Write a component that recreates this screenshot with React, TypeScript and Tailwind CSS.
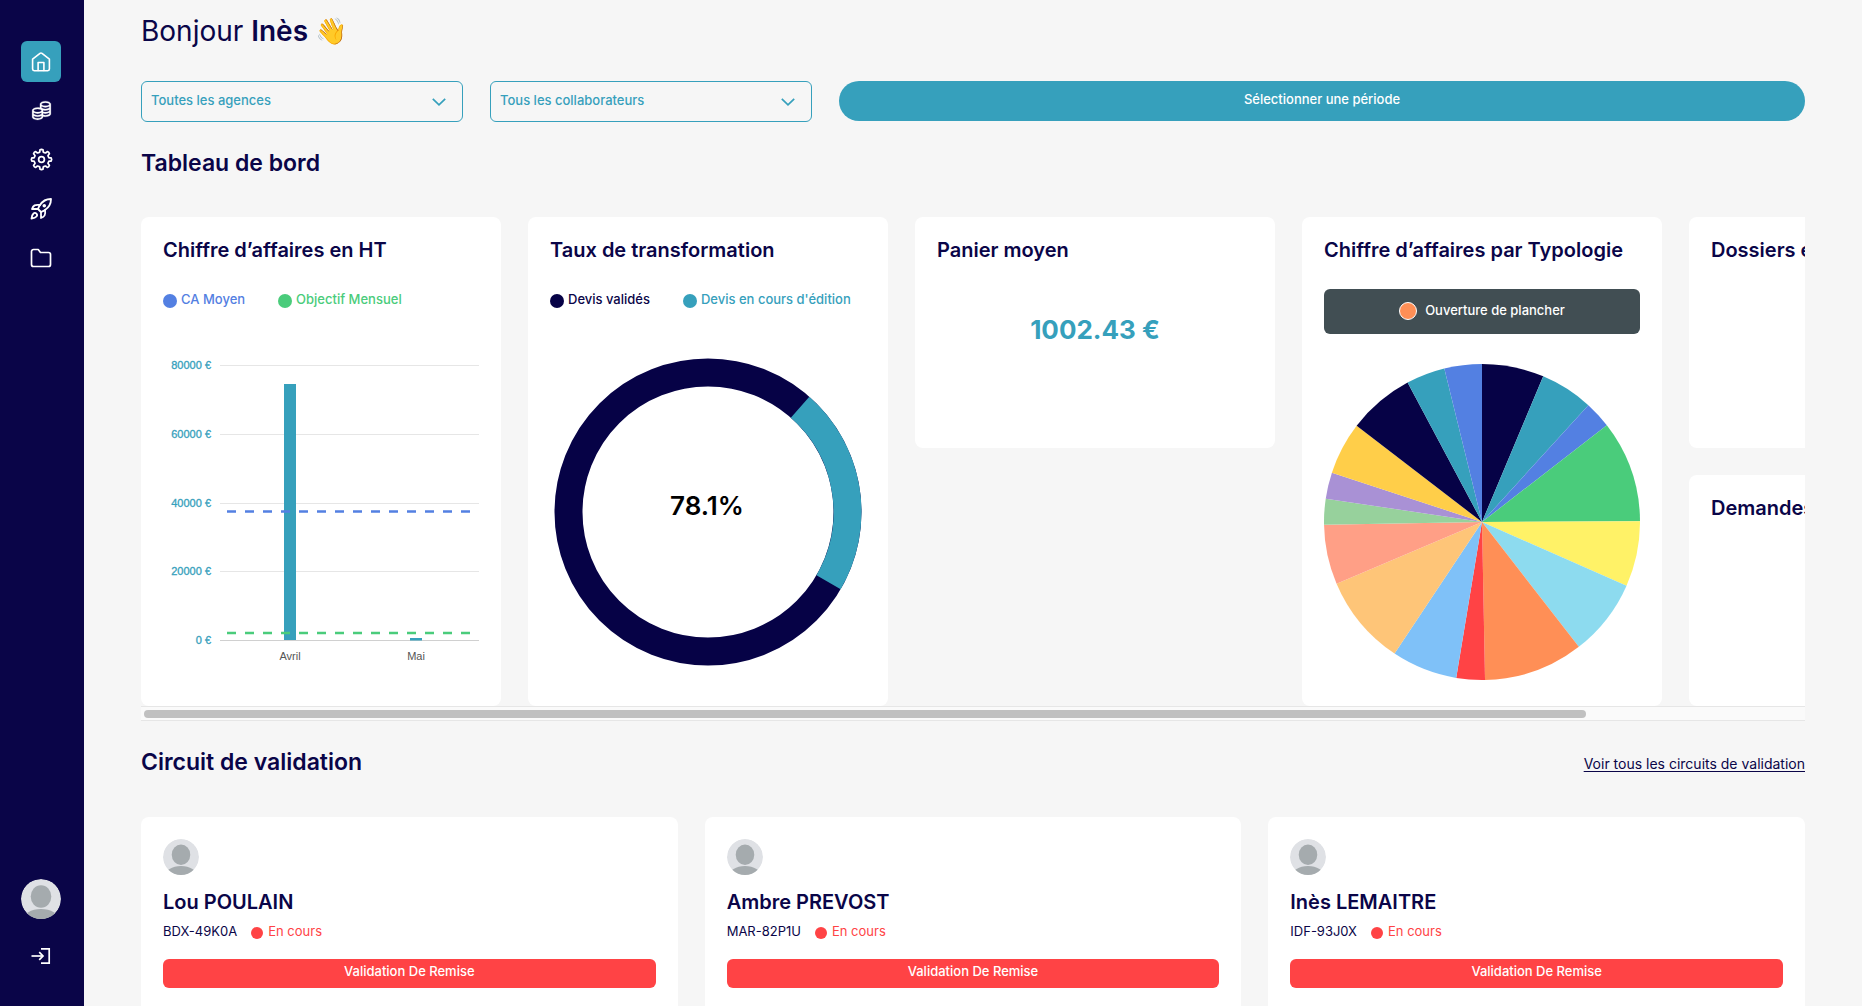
import type { ReactNode } from 'react';
import { LiaCoinsSolid } from 'react-icons/lia';

const NAVY = '#060246';
const TEAL = '#36A0BC';
const BLUE = '#5380E2';
const GREEN = '#4ACC7B';

function polar(cx: number, cy: number, r: number, deg: number) {
  const a = ((deg - 90) * Math.PI) / 180;
  return `${(cx + r * Math.cos(a)).toFixed(2)} ${(cy + r * Math.sin(a)).toFixed(2)}`;
}

/* ---------- Icons ---------- */

function HomeIcon() {
  return (
    <svg viewBox="0 0 20 20" className="size-5" fill="none" stroke="currentColor" strokeWidth="1.6" strokeLinejoin="round" strokeLinecap="round" aria-hidden="true">
      <path d="M1.6 7.2 9 1.4a1.6 1.6 0 0 1 2 0l7.4 5.8v9.9a1.6 1.6 0 0 1-1.6 1.6H3.2a1.6 1.6 0 0 1-1.6-1.6z" />
      <path d="M7.1 18.5v-8h5.8v8" />
    </svg>
  );
}

function GearIcon() {
  let d = '';
  const teeth = 8;
  const pts: [number, number][] = [
    [-22.5, 7.7], [-13, 8], [-9, 10.2], [0, 10.6], [9, 10.2], [13, 8],
  ];
  for (let i = 0; i < teeth; i++) {
    pts.forEach(([off, r]) => {
      d += `${d ? 'L' : 'M'}${polar(12, 12, r, i * 45 + off)}`;
    });
  }
  return (
    <svg viewBox="0 0 24 24" className="size-[23px]" fill="none" stroke="currentColor" strokeWidth="1.8" strokeLinejoin="round" aria-hidden="true">
      <path d={d + 'Z'} />
      <circle cx="12" cy="12" r="3" />
    </svg>
  );
}

function RocketIcon() {
  return (
    <svg viewBox="0 0 24 24" className="size-6" fill="none" stroke="currentColor" strokeWidth="1.8" strokeLinecap="round" strokeLinejoin="round" aria-hidden="true">
      <path d="M4.5 16.5c-1.5 1.26-2 5-2 5s3.74-.5 5-2c.71-.84.7-2.13-.09-2.91a2.18 2.18 0 0 0-2.91-.09z" />
      <path d="m12 15-3-3a22 22 0 0 1 2-3.95A12.88 12.88 0 0 1 22 2c0 2.72-.78 7.5-6 11a22.35 22.35 0 0 1-4 2z" />
      <path d="M9 12H3s.9-2.6 2.6-3.6C7.4 7.4 11 8 11 8M12 15v6s2.6-.9 3.6-2.6C16.6 16.6 16 13 16 13" />
      <circle cx="15.3" cy="8.8" r="1.8" fill="currentColor" stroke="none" />
    </svg>
  );
}

function FolderIcon() {
  return (
    <svg viewBox="0 0 24 24" className="size-6" fill="none" stroke="currentColor" strokeWidth="1.7" strokeLinejoin="round" aria-hidden="true">
      <path d="M21.5 18.5a2 2 0 0 1-2 2h-15a2 2 0 0 1-2-2v-13a2 2 0 0 1 2-2h4.700l2.300 3h8a2 2 0 0 1 2 2z" />
    </svg>
  );
}

function LogoutIcon() {
  return (
    <svg viewBox="0 0 20 18" className="h-[18px] w-5" fill="none" stroke="currentColor" strokeWidth="1.7" aria-hidden="true">
      <path d="M10 1.8h8.2v14.4H10" />
      <path d="M.5 9h11.2" />
      <path d="m8.2 5.2 3.8 3.8-3.8 3.8" />
    </svg>
  );
}

function Avatar({ className }: { className: string }) {
  return (
    <svg viewBox="0 0 40 40" className={`shrink-0 rounded-full ${className}`} role="img" aria-label="Avatar">
      <circle cx="20" cy="20" r="20" fill="#DFE1E5" />
      <ellipse cx="20" cy="17.5" rx="10.3" ry="11.3" fill="#A5ABAE" />
      <ellipse cx="20" cy="41" rx="18" ry="11" fill="#A5ABAE" />
    </svg>
  );
}

/* ---------- Layout pieces ---------- */

function NavButton({ label, active, children }: { label: string; active?: boolean; children: ReactNode }) {
  return (
    <button
      type="button"
      aria-label={label}
      className={`flex h-[41px] w-10 items-center justify-center rounded-md text-white ${active ? 'bg-[#36A0BC]' : ''}`}
    >
      {children}
    </button>
  );
}

function Select({ id, label }: { id: string; label: string }) {
  return (
    <div className="relative w-[322px]">
      <select
        id={id}
        aria-label={label}
        className="h-[41px] w-full appearance-none rounded-md border border-[#36A0BC] bg-transparent px-[9px] pb-0.5 text-[13px] font-medium text-[#36A0BC]"
      >
        <option>{label}</option>
      </select>
      <svg viewBox="0 0 14 8" className="pointer-events-none absolute top-[17px] right-[17px] h-2 w-3.5" fill="none" stroke={TEAL} strokeWidth="1.7" aria-hidden="true">
        <path d="m.8.8 6.200 6 6.200-6" />
      </svg>
    </div>
  );
}

function Card({ title, className = '', children }: { title: string; className?: string; children?: ReactNode }) {
  return (
    <article className={`w-[360px] shrink-0 rounded-lg bg-white px-[22px] pt-[19px] ${className}`}>
      <h3 className="text-xl leading-7 font-semibold whitespace-nowrap">{title}</h3>
      {children}
    </article>
  );
}

function Legend({ items }: { items: { label: string; dot: string; text: string }[] }) {
  return (
    <ul className="mt-[25px] flex gap-[33px]">
      {items.map((it) => (
        <li key={it.label} className={`flex items-center gap-1 text-[13px] leading-5 font-medium whitespace-nowrap ${it.text}`}>
          <span className={`mt-1 size-3.5 rounded-full ${it.dot}`} />
          {it.label}
        </li>
      ))}
    </ul>
  );
}

function RevenueChart() {
  const rows = [
    { y: 36, label: '80000 €' },
    { y: 105, label: '60000 €' },
    { y: 174, label: '40000 €' },
    { y: 242, label: '20000 €' },
    { y: 311, label: '0 €' },
  ];
  return (
    <svg viewBox="0 0 316 347" className="mt-5 w-full" fontFamily="'Liberation Sans', Arial, sans-serif" fontSize="11" role="img" aria-label="Chiffre d’affaires par mois">
      {rows.map((r) => (
        <g key={r.y}>
          <path d={`M57 ${r.y + 0.5}H316`} stroke={r.y === 311 ? '#D0D0D0' : '#E6E6E6'} />
          <text x="48" y={r.y + 4} textAnchor="end" fill={TEAL} stroke={TEAL} strokeWidth="0.3">
            {r.label}
          </text>
        </g>
      ))}
      <rect x="121" y="55" width="12" height="256" fill={TEAL} />
      <rect x="247" y="309" width="12" height="2.5" fill={TEAL} />
      <path d="M64 182.500H310" stroke={BLUE} strokeWidth="2.5" strokeDasharray="9 9" />
      <path d="M64 304H310" stroke={GREEN} strokeWidth="2.5" strokeDasharray="9 9" />
      <text x="127" y="331" textAnchor="middle" fill="#555">Avril</text>
      <text x="253" y="331" textAnchor="middle" fill="#555">Mai</text>
    </svg>
  );
}

function DonutChart() {
  return (
    <svg viewBox="0 0 316 347" className="mt-5 w-full" role="img" aria-label="78.1% de devis validés">
      <circle cx="158" cy="183" r="139.5" fill="none" stroke={NAVY} strokeWidth="28" />
      <path d={`M${polar(158, 183, 139.5, 41.3)}A139.5 139.5 0 0 1 ${polar(158, 183, 139.5, 120.2)}`} fill="none" stroke={TEAL} strokeWidth="28" />
      <text x="157" y="186" textAnchor="middle" fontFamily="Inter, sans-serif" fontSize="26" fontWeight="600" fill="#000">
        78.1%
      </text>
    </svg>
  );
}

const SLICES: [number, string][] = [
  [22.8, NAVY], [42.3, TEAL], [52.2, BLUE], [89.7, GREEN], [113.8, '#FFF267'], [142.2, '#8DDBEF'],
  [178.9, '#FF8F56'], [189.4, '#FF4345'], [213.6, '#7FC1F8'], [247, '#FEC578'], [269, '#FF9F86'],
  [278.5, '#97D19C'], [288.2, '#A991D5'], [307.5, '#FFCE49'], [331.9, NAVY], [346.2, TEAL], [360, BLUE],
];

function PieChart() {
  return (
    <svg viewBox="0 0 316 316" className="mt-[30px] w-full" role="img" aria-label="Répartition par typologie">
      {SLICES.map(([end, color], i) => {
        const start = i === 0 ? 0 : SLICES[i - 1][0];
        return <path key={end} d={`M158 158L${polar(158, 158, 158, start)}A158 158 0 0 1 ${polar(158, 158, 158, end)}Z`} fill={color} />;
      })}
    </svg>
  );
}

const CIRCUITS = [
  { name: 'Lou POULAIN', code: 'BDX-49K0A' },
  { name: 'Ambre PREVOST', code: 'MAR-82P1U' },
  { name: 'Inès LEMAITRE', code: 'IDF-93J0X' },
];

export default function App() {
  return (
    <div className="flex h-screen bg-[#F6F6F6] font-['Inter',sans-serif] text-[#0A0548]">
      <nav aria-label="Navigation principale" className="flex w-[84px] shrink-0 flex-col items-center justify-between bg-[#0A0548] pt-[41px] pr-0.5 pb-[30px]">
        <div className="flex flex-col gap-2">
          <NavButton label="Accueil" active><HomeIcon /></NavButton>
          <NavButton label="Finances"><LiaCoinsSolid size={25} stroke="currentColor" strokeWidth={0.3} /></NavButton>
          <NavButton label="Paramètres"><GearIcon /></NavButton>
          <NavButton label="Projets"><RocketIcon /></NavButton>
          <NavButton label="Dossiers"><FolderIcon /></NavButton>
        </div>
        <div className="flex flex-col items-center gap-4">
          <Avatar className="size-10" />
          <NavButton label="Se déconnecter"><LogoutIcon /></NavButton>
        </div>
      </nav>

      <main className="min-w-0 flex-1 overflow-y-auto px-[57px] pt-[11px] [scrollbar-width:none]">
        <h1 className="flex gap-[7px] text-[28px] leading-10">
          <span>
            Bonjour <strong className="font-semibold">Inès</strong>
          </span>
          <span className="text-[26px]">👋</span>
        </h1>

        <div className="mt-[30px] flex items-start gap-[27px]">
          <Select id="agence" label="Toutes les agences" />
          <Select id="collaborateur" label="Tous les collaborateurs" />
          <button type="button" className="h-10 flex-1 rounded-full bg-[#36A0BC] pb-0.5 text-[13px] font-medium text-white">
            Sélectionner une période
          </button>
        </div>

        <h2 className="mt-[25px] text-[23px] leading-8 font-semibold">Tableau de bord</h2>

        <div className="mt-[38px] flex gap-[27px] overflow-x-auto [scrollbar-width:none]">
          <Card title="Chiffre d’affaires en HT">
            <Legend
              items={[
                { label: 'CA Moyen', dot: 'bg-[#5380E2]', text: 'text-[#5380E2]' },
                { label: 'Objectif Mensuel', dot: 'bg-[#4ACC7B]', text: 'text-[#4ACC7B]' },
              ]}
            />
            <RevenueChart />
          </Card>
          <Card title="Taux de transformation">
            <Legend
              items={[
                { label: 'Devis validés', dot: 'bg-[#060246]', text: 'text-[#0A0548]' },
                { label: "Devis en cours d'édition", dot: 'bg-[#36A0BC]', text: 'text-[#36A0BC]' },
              ]}
            />
            <DonutChart />
          </Card>
          <Card title="Panier moyen" className="h-[231px]">
            <p className="mt-[46px] text-center text-[26px] leading-10 font-bold text-[#36A0BC]">1002.43 €</p>
          </Card>
          <Card title="Chiffre d’affaires par Typologie" className="pb-[26px]">
            <div className="mt-[25px] flex h-[45px] items-center justify-center gap-2 rounded-md bg-[#414E53] pb-0.5 text-[13px] font-medium text-white">
              <span className="size-[18px] rounded-full border border-white bg-[#FF8F56]" />
              Ouverture de plancher
            </div>
            <PieChart />
          </Card>
          <div className="flex flex-col gap-[27px]">
            <Card title="Dossiers en cours" className="h-[231px]" />
            <Card title="Demandes en attente" className="h-[231px]" />
          </div>
        </div>
        <div className="h-[15px] border-y border-[#E6E6E6] bg-[#FAFAFA] px-[3px] pt-[3px]">
          <div className="h-2 w-[87%] rounded-full bg-[#C0C0C0]" />
        </div>

        <div className="mt-[25px] flex items-center justify-between">
          <h2 className="text-[23px] leading-8 font-semibold">Circuit de validation</h2>
          <a href="#circuits" className="pt-1 text-sm leading-5 underline underline-offset-2">
            Voir tous les circuits de validation
          </a>
        </div>

        <div className="mt-[39px] grid grid-cols-3 gap-[27px]">
          {CIRCUITS.map((c) => (
            <article key={c.code} className="rounded-lg bg-white px-[22px] pt-[22px] pb-9">
              <Avatar className="size-9" />
              <h3 className="mt-[13px] text-xl leading-7 font-semibold">{c.name}</h3>
              <div className="mt-[5px] flex items-center text-[13px] leading-5">
                <span>{c.code}</span>
                <span className="mt-1 ml-3.5 size-3 rounded-full bg-[#FF4345]" />
                <span className="ml-[5px] text-[#FF4345]">En cours</span>
              </div>
              <button type="button" className="mt-[18px] flex h-[29px] w-full items-center justify-center rounded-md bg-[#FF4345] pb-1 text-[13px] font-medium text-white">
                Validation De Remise
              </button>
            </article>
          ))}
        </div>
      </main>
    </div>
  );
}
